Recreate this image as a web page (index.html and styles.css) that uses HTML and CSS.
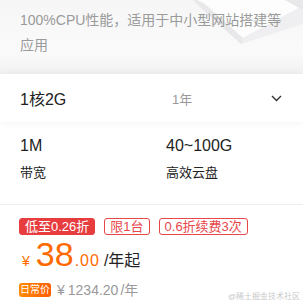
FILE: index.html
```html
<!DOCTYPE html>
<html lang="zh-CN">
<head>
  <meta charset="UTF-8" />
  <meta name="viewport" content="width=device-width, initial-scale=1.0"/>
  <title>云服务器套餐</title>
  <link rel="stylesheet" href="styles.css">
</head>
<body>
  <div class="card">
    <div class="intro">
      <svg class="box-art" width="110" height="60" viewBox="0 0 110 60">
        <polygon points="0,0 96,0 110,-8 110,22 48,44 8,8" fill="#e8e8ea"/>
        <polygon points="4,0 92,0 106,8 50,38 12,4" fill="#fdfdfd"/>
        <polygon points="50,38 106,8 110,10 110,24 48,44" fill="#efeff1"/>
      </svg>
      <p class="desc">100%CPU性能，适用于中小型网站搭建等应用</p>
    </div>

    <div class="select">
      <span class="spec-name">1核2G</span>
      <span class="term">1年</span>
      <svg class="chevron" width="11" height="7" viewBox="0 0 11 7">
        <path d="M1 1l4.5 4.5L10 1" fill="none" stroke="#333" stroke-width="1.4"/>
      </svg>
    </div>

    <div class="specs">
      <div class="spec">
        <div class="value">1M</div>
        <div class="label">带宽</div>
      </div>
      <div class="spec">
        <div class="value">40~100G</div>
        <div class="label">高效云盘</div>
      </div>
    </div>

    <div class="offer">
      <div class="tags">
        <span class="tag solid">低至0.26折</span>
        <span class="tag">限1台</span>
        <span class="tag">0.6折续费3次</span>
      </div>
      <div class="price">
        <span class="yen">¥</span>
        <span class="amount">38</span>
        <span class="cents">.00</span>
        <span class="unit">/年起</span>
      </div>
      <div class="daily">
        <span class="daily-tag">日常价</span>
        <span class="daily-price">¥<span class="gap">1234.20</span>/年</span>
      </div>
    </div>

    <span class="watermark">@稀土掘金技术社区</span>
  </div>
</body>
</html>
```

FILE: styles.css
```css
body {
  margin: 0;
  background: #fff;
  font-family: "Liberation Sans", "Noto Sans CJK SC", sans-serif;
  color: #222;
}

.card {
  position: relative;
  width: 303px;
  height: 303px;
  overflow: hidden;
}

.intro {
  position: relative;
  height: 74px;
  padding: 8px 20px 0;
  box-sizing: border-box;
  background: linear-gradient(180deg, #f6f6f7 0%, #fafafa 70%, #f2f2f2 100%);
}

.box-art {
  position: absolute;
  top: 0;
  right: 0;
}

.desc {
  position: relative;
  margin: 0;
  font-size: 14px;
  line-height: 25px;
  color: #9a9a9a;
}

.select {
  position: relative;
  display: flex;
  align-items: center;
  height: 48px;
  padding: 0 20px;
  background: #fff;
  box-shadow: 0 0 8px rgba(0, 0, 0, 0.06);
}

.spec-name {
  width: 152px;
  font-size: 16px;
}

.term {
  flex: 1;
  font-size: 13px;
  color: #999;
}

.chevron {
  margin-right: 1px;
}

.specs {
  display: grid;
  grid-template-columns: 146px 1fr;
  padding: 13px 20px 21px;
  border-bottom: 1px solid #eee;
}

.value {
  font-size: 16px;
  line-height: 22px;
}

.label {
  margin-top: 6px;
  font-size: 13px;
  line-height: 20px;
}

.offer {
  padding: 13px 19px 0;
}

.tags {
  display: flex;
  gap: 9px;
}

.tag {
  height: 17px;
  padding: 0 5px;
  border: 1px solid #e8474a;
  border-radius: 3px;
  box-sizing: border-box;
  font-size: 13px;
  line-height: 15px;
  color: #e8474a;
}

.tag.solid {
  background: #e83d3f;
  border-color: #e83d3f;
  color: #fff;
}

.price {
  display: flex;
  align-items: baseline;
  margin-top: 1px;
  padding-left: 3px;
  line-height: 36px;
  color: #ff6a00;
}

.yen {
  font-size: 14px;
  margin-right: 6px;
}

.amount {
  font-size: 34px;
}

.cents {
  margin-left: 1px;
  font-size: 16px;
  letter-spacing: 1px;
}

.unit {
  margin-left: 4px;
  font-size: 16px;
  color: #222;
}

.daily {
  display: flex;
  align-items: center;
  gap: 6px;
  margin-top: 2px;
}

.daily-tag {
  height: 14px;
  padding: 0 1px;
  border-radius: 3px;
  background: linear-gradient(90deg, #ff8c00, #ff5a00);
  font-size: 10px;
  line-height: 14px;
  color: #fff;
}

.daily-price {
  font-size: 14px;
  line-height: 18px;
  color: #999;
}

.daily-price .gap {
  margin: 0 2px 0 3px;
}

.watermark {
  position: absolute;
  right: 3px;
  bottom: 2px;
  font-size: 8px;
  color: #c9c9c9;
}
```
